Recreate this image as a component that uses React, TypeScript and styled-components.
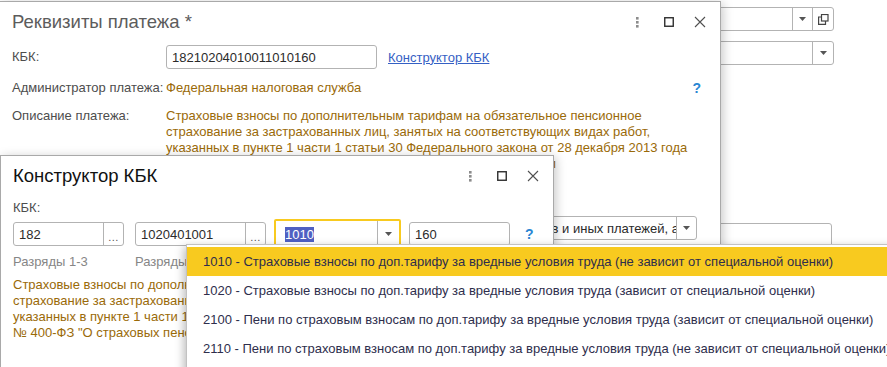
import React from "react";
import styled, { createGlobalStyle } from "styled-components";

const GlobalStyle = createGlobalStyle`
  html, body {
    margin: 0;
    padding: 0;
    background: #fff;
  }

  body {
    font-family: "Liberation Sans", Arial, sans-serif;
    font-size: 13px;
    color: #4d4d4d;
  }

  * {
    box-sizing: border-box;
  }
`;

const YELLOW = "#f8ca1f";
const BROWN = "#9a6a08";

const Desktop = styled.div`
  position: relative;
  width: 887px;
  height: 367px;
  overflow: hidden;
  background: #fff;
`;

const BackForm = styled.div`
  display: flex;
  flex-direction: column;
  align-items: flex-start;
  padding: 7px 0 0 690px;
`;

const Field = styled.div<{ $w: number; $mt?: number }>`
  display: flex;
  align-items: stretch;
  flex: none;
  width: ${(p) => p.$w}px;
  height: 24px;
  margin-top: ${(p) => p.$mt ?? 0}px;

  background: #fff;
  border: 1px solid #b3b3b3;
  border-radius: 3px;
  overflow: hidden;
`;

const FocusedField = styled(Field)`
  height: 30px;
  border: 2px solid ${YELLOW};
  border-radius: 2px;
`;

const FieldText = styled.div<{ $end?: boolean }>`
  flex: 1;
  min-width: 0;
  display: flex;
  align-items: center;
  justify-content: ${(p) => (p.$end ? "flex-end" : "flex-start")};
  padding: ${(p) => (p.$end ? "0" : "0 5px")};

  color: #2b2b2b;
  white-space: nowrap;
  overflow: hidden;
`;

const Clipped = styled.span`
  margin-right: -3px;
`;

const Selection = styled.span`
  margin-left: 4px;
  padding: 1px 0;
  background: #4f60c2;
  color: #fff;
  line-height: 13px;
`;

const FieldButton = styled.div<{ $w?: number }>`
  width: ${(p) => p.$w ?? 20}px;
  flex: none;
  display: flex;
  align-items: center;
  justify-content: center;

  border-left: 1px solid #b3b3b3;
  color: #555;
  font-size: 11px;
`;

const Ellipsis = styled.span`
  padding-top: 5px;
  letter-spacing: 0.5px;
`;

const Window = styled.section<{ $left: number; $top: number; $w: number; $h: number }>`
  position: absolute;
  left: ${(p) => p.$left}px;
  top: ${(p) => p.$top}px;
  width: ${(p) => p.$w}px;
  height: ${(p) => p.$h}px;

  display: flex;
  flex-direction: column;

  background: #fff;
  border: 1px solid #a9a9a9;
  box-shadow: 2px 2px 10px rgba(0, 0, 0, 0.22);
  overflow: hidden;
`;

const Header = styled.header`
  display: flex;
  align-items: center;
  flex: none;
  height: 40px;
  padding: 0 5px 0 12px;
`;

const Title = styled.h1<{ $active?: boolean }>`
  flex: 1;
  margin: 0;
  font-size: 18.5px;
  font-weight: normal;
  color: ${(p) => (p.$active ? "#111" : "#5c5c5c")};
  white-space: nowrap;
`;

const HeaderButton = styled.div`
  width: 31px;
  height: 24px;
  display: flex;
  align-items: center;
  justify-content: center;
`;

const Body = styled.div`
  display: flex;
  flex-direction: column;
  padding: 0 12px;
`;

const Row = styled.div<{ $mt: number; $top?: boolean }>`
  display: flex;
  align-items: ${(p) => (p.$top ? "flex-start" : "center")};
  margin-top: ${(p) => p.$mt}px;
`;

const Label = styled.div`
  width: 154px;
  flex: none;
  line-height: 16px;
  color: #4d4d4d;
`;

const Value = styled.div`
  line-height: 16px;
  color: ${BROWN};
`;

const Caption = styled.div<{ $w: number }>`
  width: ${(p) => p.$w}px;
  flex: none;
  line-height: 16px;
  color: #868686;
  white-space: nowrap;
`;

const Link = styled.a`
  margin-left: 11px;
  color: #3560c4;
  text-decoration: underline;
  cursor: pointer;
`;

const HelpMark = styled.span<{ $ml?: number }>`
  margin-left: ${(p) => (p.$ml !== undefined ? `${p.$ml}px` : "auto")};
  margin-right: 7px;
  color: #2a86d3;
  font-size: 14px;
  font-weight: bold;
  line-height: 16px;
`;

const Description = styled.div`
  display: flex;
  flex-direction: column;
  color: ${BROWN};
`;

const Line = styled.div`
  line-height: 16px;
  white-space: nowrap;
`;

const FieldsRow = styled.div<{ $mt: number }>`
  display: flex;
  align-items: center;
  gap: 8px;
  margin-top: ${(p) => p.$mt}px;
`;

const Popup = styled.ul`
  position: absolute;
  left: 186px;
  top: 244px;
  width: 720px;
  height: 140px;
  margin: 0;
  padding: 2px 0 0;
  list-style: none;

  background: #fff;
  border: 1px solid #c2c2c2;
  box-shadow: -2px 3px 9px rgba(0, 0, 0, 0.28);
`;

const PopupItem = styled.li<{ $selected?: boolean }>`
  display: flex;
  align-items: center;
  height: 29px;
  padding-left: 16px;

  background: ${(p) => (p.$selected ? YELLOW : "transparent")};
  color: #2e2e4c;
  white-space: nowrap;
`;

const DotsIcon = () => (
  <svg width="3" height="11" viewBox="0 0 3 11">
    <rect x="0" y="0" width="2.6" height="2.6" fill="#8c8c8c" />
    <rect x="0" y="4" width="2.6" height="2.6" fill="#8c8c8c" />
    <rect x="0" y="8" width="2.6" height="2.6" fill="#8c8c8c" />
  </svg>
);

const MaximizeIcon = () => (
  <svg width="10" height="10" viewBox="0 0 10 10">
    <rect x="0.75" y="0.75" width="8.5" height="8.5" fill="none" stroke="#2f2f2f" strokeWidth="1.4" />
  </svg>
);

const CloseIcon = () => (
  <svg width="12" height="12" viewBox="0 0 12 12">
    <path d="M1 1 L11 11 M11 1 L1 11" stroke="#505050" strokeWidth="1.1" fill="none" />
  </svg>
);

const ArrowDown = () => (
  <svg width="7" height="4" viewBox="0 0 7 4">
    <path d="M0 0 H7 L3.5 4 Z" fill="#555" />
  </svg>
);

const OpenIcon = () => (
  <svg width="11" height="11" viewBox="0 0 11 11">
    <rect x="3.5" y="0.5" width="6.5" height="6.5" fill="none" stroke="#444" strokeWidth="1.2" />
    <path d="M3.5 3 H0.6 V10.4 H7.5 V7" fill="none" stroke="#444" strokeWidth="1.2" />
  </svg>
);

const WindowHeader = ({ title, active }: { title: string; active?: boolean }) => (
  <Header>
    <Title $active={active}>{title}</Title>
    <HeaderButton>
      <DotsIcon />
    </HeaderButton>
    <HeaderButton>
      <MaximizeIcon />
    </HeaderButton>
    <HeaderButton>
      <CloseIcon />
    </HeaderButton>
  </Header>
);

const descriptionLines = [
  "Страховые взносы по дополнительным тарифам на обязательное пенсионное",
  "страхование за застрахованных лиц, занятых на соответствующих видах работ,",
  "указанных в пункте 1 части 1 статьи 30 Федерального закона от 28 декабря 2013 года",
  "№ 400-ФЗ \"О страховых пенсиях\", по дополнительным тарифам",
];

const options = [
  "1010 - Страховые взносы по доп.тарифу за вредные условия труда (не зависит от специальной оценки)",
  "1020 - Страховые взносы по доп.тарифу за вредные условия труда (зависит от специальной оценки)",
  "2100 - Пени по страховым взносам по доп.тарифу за вредные условия труда (зависит от специальной оценки)",
  "2110 - Пени по страховым взносам по доп.тарифу за вредные условия труда (не зависит от специальной оценки)",
];

const DescriptionText = () => (
  <Description>
    {descriptionLines.map((line) => (
      <Line key={line}>{line}</Line>
    ))}
  </Description>
);

export default function App() {
  return (
    <>
      <GlobalStyle />
      <Desktop>
        <BackForm>
          <Field $w={144}>
            <FieldText />
            <FieldButton>
              <ArrowDown />
            </FieldButton>
            <FieldButton $w={21}>
              <OpenIcon />
            </FieldButton>
          </Field>
          <Field $w={144} $mt={10}>
            <FieldText />
            <FieldButton $w={21}>
              <ArrowDown />
            </FieldButton>
          </Field>
          <Field $w={142} $mt={158}>
            <FieldText />
          </Field>
        </BackForm>

        <Window $left={-1} $top={1} $w={722} $h={420}>
          <WindowHeader title="Реквизиты платежа *" />
          <Body>
            <Row $mt={3}>
              <Label>КБК:</Label>
              <Field $w={211}>
                <FieldText>18210204010011010160</FieldText>
              </Field>
              <Link>Конструктор КБК</Link>
            </Row>
            <Row $mt={11}>
              <Label>Администратор платежа:</Label>
              <Value>Федеральная налоговая служба</Value>
              <HelpMark>?</HelpMark>
            </Row>
            <Row $mt={12} $top>
              <Label>Описание платежа:</Label>
              <DescriptionText />
            </Row>
            <Row $mt={44}>
              <Label>Вид платежа:</Label>
              <Field $w={531}>
                <FieldText $end>
                  <Clipped>Уплата налогов, сборов, страховых взносов и иных платежей, а</Clipped>
                </FieldText>
                <FieldButton>
                  <ArrowDown />
                </FieldButton>
              </Field>
            </Row>
          </Body>
        </Window>

        <Window $left={0} $top={155} $w={554} $h={260}>
          <WindowHeader title="Конструктор КБК" active />
          <Body>
            <Row $mt={4}>
              <Label>КБК:</Label>
            </Row>
            <FieldsRow $mt={3}>
              <Field $w={111}>
                <FieldText>182</FieldText>
                <FieldButton>
                  <Ellipsis>...</Ellipsis>
                </FieldButton>
              </Field>
              <Field $w={131} style={{ marginLeft: 3 }}>
                <FieldText>1020401001</FieldText>
                <FieldButton>
                  <Ellipsis>...</Ellipsis>
                </FieldButton>
              </Field>
              <FocusedField $w={127}>
                <FieldText>
                  <Selection>1010</Selection>
                </FieldText>
                <FieldButton $w={22}>
                  <ArrowDown />
                </FieldButton>
              </FocusedField>
              <Field $w={101}>
                <FieldText>160</FieldText>
              </Field>
              <HelpMark $ml={7}>?</HelpMark>
            </FieldsRow>
            <FieldsRow $mt={5}>
              <Caption $w={111}>Разряды 1-3</Caption>
              <Caption $w={131} style={{ marginLeft: 3 }}>Разряды 4-13</Caption>
              <Caption $w={127}>Разряды 14-17</Caption>
              <Caption $w={101}>Разряды 18-20</Caption>
            </FieldsRow>
            <Row $mt={7} $top>
              <DescriptionText />
            </Row>
          </Body>
        </Window>

        <Popup>
          {options.map((option, i) => (
            <PopupItem key={option} $selected={i === 0}>
              {option}
            </PopupItem>
          ))}
        </Popup>
      </Desktop>
    </>
  );
}
